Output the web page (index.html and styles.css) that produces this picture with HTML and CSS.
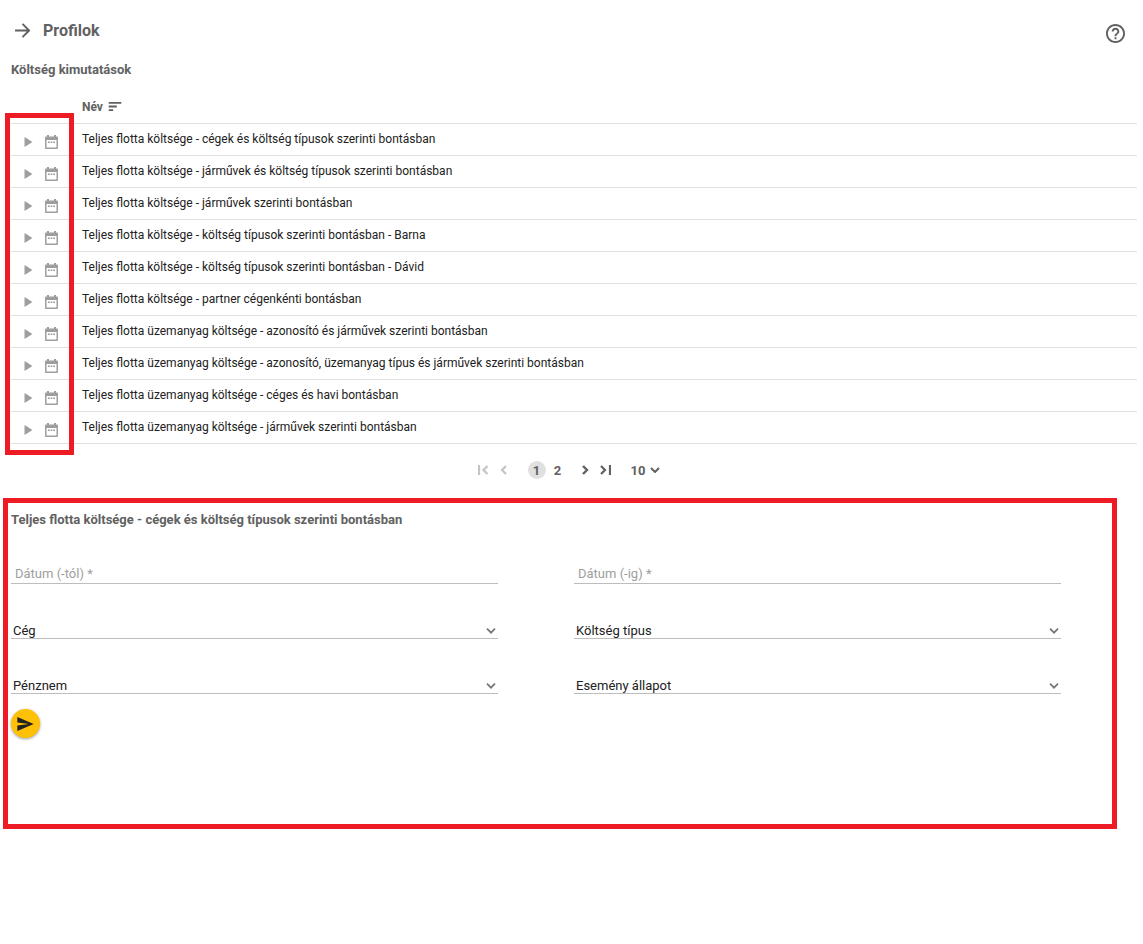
FILE: index.html
```html
<!DOCTYPE html>
<html lang="hu">
<head>
<meta charset="utf-8">
<title>Profilok</title>
<link rel="stylesheet" href="styles.css">
</head>
<body>
<svg class="sprite" aria-hidden="true">
  <symbol id="play" viewBox="0 0 8 10"><path d="M0 0v10l8-5z"/></symbol>
  <symbol id="calendar" viewBox="0 0 13 14"><path fill-rule="evenodd" d="M2 0h2v1.500h5V0h2v1.500h1q1 0 1 1V13q0 1-1 1H1q-1 0-1-1V2.500q0-1 1-1h1zM1.500 5v7.500h10V5z"/><path d="M3 6.500h1.800V8H3zM5.600 6.500h1.800V8H5.600zM8.200 6.500H10V8H8.200z"/></symbol>
  <symbol id="chevron" viewBox="0 0 10 6"><path d="M1 .7l4 4 4-4" fill="none" stroke="currentColor" stroke-width="1.700"/></symbol>
</svg>
<header class="topbar">
  <button class="icon-button" aria-label="Tovább"><svg class="arrow" viewBox="0 0 16 16"><path d="M0 8h14.500M8 1l7 7-7 7" fill="none" stroke="currentColor" stroke-width="2"/></svg></button>
  <h1 class="title">Profilok</h1>
  <button class="icon-button help" aria-label="Súgó"><svg class="help-icon" viewBox="2 2 20 20"><path d="M11 18h2v-2h-2v2zm1-16C6.480 2 2 6.480 2 12s4.480 10 10 10 10-4.480 10-10S17.520 2 12 2zm0 18c-4.410 0-8-3.590-8-8s3.590-8 8-8 8 3.590 8 8-3.590 8-8 8zm0-14c-2.210 0-4 1.790-4 4h2c0-1.100.9-2 2-2s2 .9 2 2c0 2-3 1.750-3 5h2c0-2.250 3-2.500 3-5 0-2.210-1.790-4-4-4z"/></svg></button>
</header>
<main>
  <section class="reports">
    <h2 class="subtitle">Költség kimutatások</h2>
    <div class="table-wrap">
      <table class="table">
        <thead>
          <tr><td class="actions-col"></td><th scope="col"><button class="sort">Név <svg class="sort-icon" viewBox="0 0 14 10"><path d="M0 0h14v2H0zM0 4h9v2H0zM0 8h5v2H0z"/></svg></button></th></tr>
        </thead>
        <tbody>
          <tr><td><div class="actions"><button class="icon-button" aria-label="Futtatás"><svg class="play"><use href="#play"/></svg></button><button class="icon-button" aria-label="Ütemezés"><svg class="calendar"><use href="#calendar"/></svg></button></div></td><td>Teljes flotta költsége - cégek és költség típusok szerinti bontásban</td></tr>
          <tr><td><div class="actions"><button class="icon-button" aria-label="Futtatás"><svg class="play"><use href="#play"/></svg></button><button class="icon-button" aria-label="Ütemezés"><svg class="calendar"><use href="#calendar"/></svg></button></div></td><td>Teljes flotta költsége - járművek és költség típusok szerinti bontásban</td></tr>
          <tr><td><div class="actions"><button class="icon-button" aria-label="Futtatás"><svg class="play"><use href="#play"/></svg></button><button class="icon-button" aria-label="Ütemezés"><svg class="calendar"><use href="#calendar"/></svg></button></div></td><td>Teljes flotta költsége - járművek szerinti bontásban</td></tr>
          <tr><td><div class="actions"><button class="icon-button" aria-label="Futtatás"><svg class="play"><use href="#play"/></svg></button><button class="icon-button" aria-label="Ütemezés"><svg class="calendar"><use href="#calendar"/></svg></button></div></td><td>Teljes flotta költsége - költség típusok szerinti bontásban - Barna</td></tr>
          <tr><td><div class="actions"><button class="icon-button" aria-label="Futtatás"><svg class="play"><use href="#play"/></svg></button><button class="icon-button" aria-label="Ütemezés"><svg class="calendar"><use href="#calendar"/></svg></button></div></td><td>Teljes flotta költsége - költség típusok szerinti bontásban - Dávid</td></tr>
          <tr><td><div class="actions"><button class="icon-button" aria-label="Futtatás"><svg class="play"><use href="#play"/></svg></button><button class="icon-button" aria-label="Ütemezés"><svg class="calendar"><use href="#calendar"/></svg></button></div></td><td>Teljes flotta költsége - partner cégenkénti bontásban</td></tr>
          <tr><td><div class="actions"><button class="icon-button" aria-label="Futtatás"><svg class="play"><use href="#play"/></svg></button><button class="icon-button" aria-label="Ütemezés"><svg class="calendar"><use href="#calendar"/></svg></button></div></td><td>Teljes flotta üzemanyag költsége - azonosító és járművek szerinti bontásban</td></tr>
          <tr><td><div class="actions"><button class="icon-button" aria-label="Futtatás"><svg class="play"><use href="#play"/></svg></button><button class="icon-button" aria-label="Ütemezés"><svg class="calendar"><use href="#calendar"/></svg></button></div></td><td>Teljes flotta üzemanyag költsége - azonosító, üzemanyag típus és járművek szerinti bontásban</td></tr>
          <tr><td><div class="actions"><button class="icon-button" aria-label="Futtatás"><svg class="play"><use href="#play"/></svg></button><button class="icon-button" aria-label="Ütemezés"><svg class="calendar"><use href="#calendar"/></svg></button></div></td><td>Teljes flotta üzemanyag költsége - céges és havi bontásban</td></tr>
          <tr><td><div class="actions"><button class="icon-button" aria-label="Futtatás"><svg class="play"><use href="#play"/></svg></button><button class="icon-button" aria-label="Ütemezés"><svg class="calendar"><use href="#calendar"/></svg></button></div></td><td>Teljes flotta üzemanyag költsége - járművek szerinti bontásban</td></tr>
        </tbody>
      </table>
      <div class="highlight"></div>
    </div>
    <nav class="pager" aria-label="Lapozó">
      <div class="pager-group">
        <button class="icon-button" disabled aria-label="Első oldal"><svg class="edge" viewBox="0 0 11 10"><path d="M1 0v10M9.500 1l-4 4 4 4" fill="none" stroke="currentColor" stroke-width="2.200"/></svg></button>
        <button class="icon-button" disabled aria-label="Előző oldal"><svg class="step" viewBox="0 0 7 10"><path d="M6 1L2 5l4 4" fill="none" stroke="currentColor" stroke-width="2.200"/></svg></button>
      </div>
      <div class="pages">
        <button class="page current" aria-current="page">1</button>
        <button class="page">2</button>
      </div>
      <div class="pager-group">
        <button class="icon-button" aria-label="Következő oldal"><svg class="step" viewBox="0 0 7 10"><path d="M1 1l4 4-4 4" fill="none" stroke="currentColor" stroke-width="2.400"/></svg></button>
        <button class="icon-button" aria-label="Utolsó oldal"><svg class="edge" viewBox="0 0 11 10"><path d="M10 0v10M1 1l4 4-4 4" fill="none" stroke="currentColor" stroke-width="2.200"/></svg></button>
      </div>
      <div class="size">
        <select class="size-select" aria-label="Sorok száma"><option>10</option></select>
        <svg class="chevron bold" viewBox="0 0 10 6"><path d="M1 1l4 4 4-4" fill="none" stroke="currentColor" stroke-width="2"/></svg>
      </div>
    </nav>
  </section>
  <section class="panel">
    <h2 class="subtitle">Teljes flotta költsége - cégek és költség típusok szerinti bontásban</h2>
    <form class="form">
      <div class="fields">
        <input class="field date" type="text" placeholder="Dátum (-tól) *" aria-label="Dátum (-tól)" required>
        <input class="field date" type="text" placeholder="Dátum (-ig) *" aria-label="Dátum (-ig)" required>
        <div class="field choice"><select class="select" aria-label="Cég"><option>Cég</option></select><svg class="chevron"><use href="#chevron"/></svg></div>
        <div class="field choice"><select class="select" aria-label="Költség típus"><option>Költség típus</option></select><svg class="chevron"><use href="#chevron"/></svg></div>
        <div class="field choice"><select class="select" aria-label="Pénznem"><option>Pénznem</option></select><svg class="chevron"><use href="#chevron"/></svg></div>
        <div class="field choice"><select class="select" aria-label="Esemény állapot"><option>Esemény állapot</option></select><svg class="chevron"><use href="#chevron"/></svg></div>
      </div>
      <button class="send" type="button" aria-label="Küldés"><svg class="send-icon" viewBox="2 3 21 18"><path d="M2.010 21L23 12 2.010 3 2 10l15 2-15 2z"/></svg></button>
    </form>
  </section>
</main>
</body>
</html>
```

FILE: styles.css
```css
* { box-sizing: border-box; }
body {
  margin: 0;
  background: #fff;
  color: #212121;
  font-family: Roboto, "Liberation Sans", sans-serif;
  font-size: 12px;
}
h1, h2 { margin: 0; color: #616161; font-weight: 700; }
svg { display: block; fill: currentColor; }
button, input, select { font: inherit; color: inherit; border: 0; padding: 0; background: none; }
.sprite { display: none; }

.topbar { display: flex; align-items: center; height: 60px; padding: 0 18px 0 15px; color: #616161; }
.title { margin-left: 13px; font-size: 16px; line-height: 20px; padding-top: 2px; }
.arrow { width: 15px; height: 15px; }
.help { margin-left: auto; padding-top: 6px; }
.help-icon { width: 19px; height: 19px; }

.reports { padding: 0 6px 0 11px; }
.subtitle { font-size: 13px; line-height: 20px; }
.table-wrap { position: relative; padding-top: 12px; }
.table { width: 100%; border-collapse: separate; border-spacing: 0; table-layout: fixed; }
.table td, .table th { height: 32px; padding: 0 0 2px; border-bottom: 1px solid #e0e0e0; text-align: left; line-height: 16px; }
.actions-col { width: 71px; }
.sort { display: flex; align-items: center; gap: 5px; color: #616161; font-weight: 700; }
.sort-icon { width: 14px; height: 9px; }
.actions { display: flex; align-items: center; gap: 12px; padding: 7px 0 0 13px; color: #9e9e9e; }
.play { width: 9px; height: 10px; }
.calendar { width: 13px; height: 14px; }
.highlight {
  position: absolute;
  top: 33px;
  bottom: -11px;
  left: -6px;
  width: 69px;
  border: 5px solid #ed1c24;
  pointer-events: none;
}

.pager { display: flex; align-items: center; justify-content: center; height: 54px; padding: 0 11px 2px 0; color: #616161; font-size: 13px; font-weight: 700; }
.pager button:disabled { color: #c4c4c4; }
.pager-group { display: flex; gap: 11px; }
.edge { width: 11px; height: 10px; }
.step { width: 7px; height: 10px; }
.pages { display: flex; gap: 3px; margin: 0 15px 0 21px; }
.page { width: 18px; height: 18px; border-radius: 50%; text-align: center; }
.current { background: #e0e0e0; }
.size { display: flex; align-items: center; gap: 4px; margin-left: 20px; }
.size-select { appearance: none; }
.chevron { flex: none; width: 10px; height: 6px; color: #757575; }
.bold { color: #616161; }

.panel { min-height: 331px; margin: 0 26px 0 3px; padding: 7px 51px 8px 3px; border: 5px solid #ed1c24; }
.fields { display: grid; grid-template-columns: 1fr 1fr; column-gap: 76px; row-gap: 35px; padding-top: 34px; }
.field { display: flex; width: 100%; height: 20px; border-bottom: 1px solid #bdbdbd; border-radius: 0; font-size: 13px; }
.date { padding: 0 4px; outline: 0; }
.date::placeholder { color: #9e9e9e; opacity: 1; }
.choice { align-items: center; padding: 4px 2px 0 0; }
.select { appearance: none; flex: 1; min-width: 0; padding-left: 2px; line-height: 16px; }
.send {
  display: grid;
  place-items: center;
  width: 29px;
  height: 29px;
  margin-top: 15px;
  border-radius: 50%;
  background: #ffc107;
  color: #212121;
  box-shadow: 0 1px 3px #0006;
}
.send-icon { width: 17px; height: 14px; }
```
